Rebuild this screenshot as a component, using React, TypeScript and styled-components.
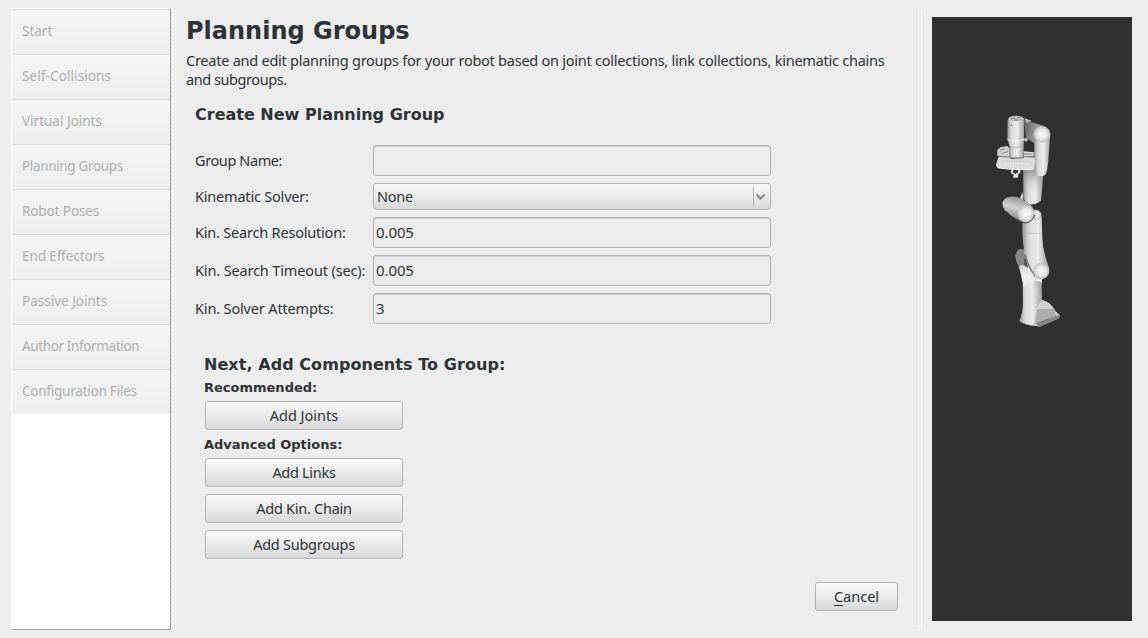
import React from "react";
import styled, { createGlobalStyle } from "styled-components";

const Global = createGlobalStyle`
  * { box-sizing: border-box; }
  html, body { margin: 0; padding: 0; }
  body { background: #ededed; overflow: hidden; }
`;

const Window = styled.div`
  display: flex;
  width: 1148px;
  height: 638px;
  padding: 8px 16px 8px 11px;
  background: #ededed;
  color: #2e3436;
  font: 14.5px/19px "Noto Sans", sans-serif;
`;

const StepList = styled.nav`
  flex: none;
  width: 160px;
  height: 622px;
  background: #fff;
  border: 1px solid #fff;
  border-right-color: #a0a0a0;
  border-bottom-color: #a0a0a0;
`;

const Step = styled.div<{ $ls: number }>`
  height: 45px;
  padding: 12px 0 0 10px;
  border-top: 1px solid #dcdcdc;
  background: linear-gradient(#f5f5f5, #eeeeee);
  color: #aeb0b0;
  font-size: 13.5px;
  line-height: 18px;
  letter-spacing: ${(p) => p.$ls}px;
  white-space: nowrap;
`;

const dots = "linear-gradient(#fff 1px, transparent 1px)";

const Splitter = styled.div<{ $x: number }>`
  flex: none;
  width: 5px;
  height: 621px;
  margin-top: 1px;
  background:
    ${(p) => `${dots} ${p.$x}px 0 / 1px 2px repeat-y,
    ${dots} ${p.$x + 1}px 1px / 1px 4px repeat-y,
    ${dots} ${p.$x + 3}px 1px / 1px 2px repeat-y`};
`;

const Page = styled.main`
  display: flex;
  flex-direction: column;
  width: 742px;
  padding: 0 20px 19px 10px;
`;

const Title = styled.h1`
  margin: 7px 0 0;
  font: bold 24px/32px "DejaVu Sans", sans-serif;
`;

const Intro = styled.p`
  margin: 4px 0 0;
  white-space: nowrap;
`;

const Line = styled.span<{ $ls: number }>`
  display: block;
  letter-spacing: ${(p) => p.$ls}px;
`;

const Heading = styled.h2<{ $ls?: number }>`
  margin: 0;
  font: bold 16px/20px "DejaVu Sans", sans-serif;
  letter-spacing: ${(p) => p.$ls ?? 0}px;
`;

const SubHeading = styled.h3<{ $top: number }>`
  margin: ${(p) => p.$top}px 0 0;
  font: bold 13px/16px "DejaVu Sans", sans-serif;
`;

const Form = styled.section`
  display: flex;
  flex-direction: column;
  margin: 16px 0 0 9px;
`;

const Fields = styled.div`
  display: grid;
  grid-template-columns: 178px 398px;
  row-gap: 7px;
  align-items: center;
  margin-top: 20px;
`;

const Label = styled.label<{ $ls: number }>`
  letter-spacing: ${(p) => p.$ls}px;
  white-space: nowrap;
`;

const Field = styled.div`
  height: 31px;
  padding: 5px 2px;
  border: 1px solid #b4b4b4;
  border-radius: 3px;
  background: #ededed;
  box-shadow: inset 0 1px #cfcfcf, 0 1px #f6f6f6;
  font-size: 15px;
  letter-spacing: -0.1px;
`;

const Combo = styled.div`
  display: flex;
  align-items: center;
  justify-content: space-between;
  height: 27px;
  padding: 0 4px 0 3px;
  border: 1px solid #b4b4b4;
  border-radius: 3px;
  background: linear-gradient(#fbfbfb, #d8d8d8);
  box-shadow: 0 1px #f6f6f6;
  letter-spacing: -0.25px;
`;

const Arrow = styled.span`
  display: flex;
  align-items: center;
  height: 20px;
  padding-left: 1px;
  border-left: 1px solid #b0b0b0;
`;

const Components = styled.section`
  display: flex;
  flex-direction: column;
  margin: 31px 0 0 18px;
`;

const Button = styled.button<{ $w: number; $top: number; $ls?: number }>`
  width: ${(p) => p.$w}px;
  height: 29px;
  margin: ${(p) => p.$top}px 0 0 1px;
  padding: 0;
  border: 1px solid #b4b4b4;
  border-radius: 3px;
  background: linear-gradient(#fafafa, #d9d9d9);
  box-shadow: 0 1px #f6f6f6;
  color: #2e3436;
  font: 14.5px/19px "Noto Sans", sans-serif;
  letter-spacing: ${(p) => p.$ls ?? 0}px;
`;

const Mnemonic = styled.span`
  display: inline-block;
  height: 19px;
  border-bottom: 1px solid #2e3436;
`;

const Footer = styled.footer`
  display: flex;
  justify-content: flex-end;
  margin-top: auto;
`;

const Viewport = styled.aside`
  flex: none;
  width: 200px;
  height: 604px;
  margin: 9px 0 0 9px;
  background: #303030;
`;

const steps: [string, number][] = [
  ["Start", 0],
  ["Self-Collisions", 0.1],
  ["Virtual Joints", 0],
  ["Planning Groups", -0.34],
  ["Robot Poses", -0.1],
  ["End Effectors", -0.1],
  ["Passive Joints", 0],
  ["Author Information", -0.37],
  ["Configuration Files", -0.23],
];

const Robot = () => (
  <svg width="200" height="604" viewBox="-144 -264 600 1812" aria-label="Robot model">
    <defs>
      <linearGradient id="tube">
        <stop offset="0" stopColor="#979797" />
        <stop offset=".25" stopColor="#dadada" />
        <stop offset=".6" stopColor="#ececec" />
        <stop offset="1" stopColor="#9c9c9c" />
      </linearGradient>
      <linearGradient id="neck" x1="0" y1="0" x2="1" y2=".3">
        <stop offset="0" stopColor="#606060" />
        <stop offset="1" stopColor="#b5b5b5" />
      </linearGradient>
      <linearGradient id="capsule" x1=".6" y1="0" x2=".3" y2="1">
        <stop offset="0" stopColor="#8a8a8a" />
        <stop offset=".45" stopColor="#d2d2d2" />
        <stop offset="1" stopColor="#707070" />
      </linearGradient>
      <linearGradient id="fade" x1="0" y1="0" x2="0" y2="1">
        <stop offset="0" stopColor="#777" stopOpacity=".75" />
        <stop offset=".6" stopColor="#bbb" stopOpacity="0" />
      </linearGradient>
      <radialGradient id="ball">
        <stop offset="0" stopColor="#fafafa" />
        <stop offset=".6" stopColor="#e6e6e6" />
        <stop offset="1" stopColor="#bcbcbc" />
      </radialGradient>
    </defs>
    {/* base column and foot */}
    <path d="M128 535 L129 590 Q129 625 118 648 Q138 664 178 662 L186 600 L185 535 Z" fill="url(#tube)" />
    <path d="M166 616 Q178 592 186 585 Q210 590 222 612 L226 618 L239 630 L237 640 L178 665 L160 660 Z" fill="#d2d2d2" />
    <path d="M171 613 L223 611 L228 632 L166 654 Z" fill="#adadad" />
    <path d="M228 632 L239 630 L237 640 L178 665 L166 654 Z" fill="#858585" />
    {/* shoulder */}
    <path d="M107 454 Q106 438 120 433 L142 440 L150 485 L186 512 L186 540 Q170 554 148 550 Q132 546 127 530 Q120 490 109 468 Z" fill="url(#tube)" />
    <path d="M107 456 Q106 433 130 433 L140 440 L143 486 L135 484 Q122 476 118 485 Q108 468 107 456 Z" fill="#858585" />
    <path d="M131 460 Q140 464 145 490 L132 478 Z" fill="#505050" />
    <path d="M120 486 Q140 510 165 520 L186 520 L186 534 Q170 522 150 532 L132 545 Q124 510 120 486 Z" fill="#ededed" />
    {/* lower arm */}
    <path d="M150 317 Q180 308 185 336 L187 400 Q189 442 206 484 L206 500 L168 517 Q148 500 137 460 Q126 420 127 345 Z" fill="url(#tube)" />
    <path d="M136 450 Q146 492 166 512" fill="none" stroke="#777" strokeWidth="4" />
    <path d="M136 385 H180" stroke="#aaa" strokeWidth="2" strokeDasharray="5 3" />
    <circle cx="184" cy="498" r="24" fill="url(#ball)" />
    {/* elbow */}
    <path d="M130 190 H190 Q188 245 183 286 Q172 300 150 298 Q133 294 130 275 Z" fill="url(#tube)" />
    <path d="M130 190 H190 Q188 245 183 286 Q172 300 150 298 Q133 294 130 275 Z" fill="url(#fade)" />
    <path d="M128 260 L120 278 L130 288 Z" fill="#d0d0d0" />
    <circle cx="168" cy="330" r="16" fill="url(#ball)" />
    <path d="M92 275 Q106 272 120 280 L150 298 Q164 310 162 330 Q156 352 134 352 Q104 344 76 318 Q64 302 69 289 Q76 276 92 275 Z" fill="url(#capsule)" />
    <circle cx="138" cy="326" r="26" fill="url(#ball)" />
    <path d="M78 319 Q110 352 136 354 Q158 352 164 330" fill="none" stroke="#444" strokeWidth="3" />
    {/* upper arm */}
    <path d="M163 88 H211 L205 165 Q203 200 195 210 Q180 218 162 208 Z" fill="url(#tube)" />
    <path d="M133 42 L152 50 L192 64 L165 115 L138 100 Z" fill="url(#neck)" />
    <path d="M133 40 L155 47 L140 54 Z" fill="#bdbdbd" />
    <circle cx="186" cy="88" r="25" fill="url(#ball)" />
    <path d="M133 98 L144 102 L140 110 L133 108 Z" fill="#c8c8c8" />
    {/* gripper */}
    <path d="M52 135 L62 126 L83 123 L90 135 L88 156 L52 153 Z" fill="#cecece" />
    <path d="M60 135 L74 131 M66 145 L84 140" stroke="#8a8a8a" strokeWidth="3" />
    <path d="M131 139 L162 142 L161 154 H131 Z" fill="#e5e5e5" />
    <path d="M132 147 H158" stroke="#6b6b6b" strokeWidth="3" />
    <path d="M95 191 L92 203 L101 209 L99 218 H114 L115 208 L122 202 L119 191 Z" fill="#dedede" />
    <path d="M100 193 L99 202 L106 207 L114 202 L113 193 Z" fill="#343434" />
    {/* wrist */}
    <path d="M88 100 H131 V158 H88 Z" fill="url(#tube)" />
    <path d="M83 45 Q90 32 110 32 Q130 33 133 45 L132 106 Q130 122 128 124 L90 122 Q82 112 82 102 Z" fill="url(#tube)" />
    <ellipse cx="108" cy="41" rx="23" ry="8" fill="#bcbcbc" />
    <path d="M94 40 H107 M112 37 H122 M103 45 H116" stroke="#777" strokeWidth="2.5" />
    <path d="M83 103 Q105 113 132 103" fill="none" stroke="#f0f0f0" strokeWidth="3" />
    <path d="M89 124 Q108 130 130 124" fill="none" stroke="#a8a8a8" strokeWidth="2" />
    <path d="M57 153 L88 156 L92 161 L130 160 L134 154 L160 155 L166 166 L162 193 Q100 198 54 189 Q47 184 48 178 Z" fill="#dcdcdc" />
    <path d="M57 154 L88 157 M134 155 L160 156" fill="none" stroke="#555" strokeWidth="2" />
    <path d="M66 168 L150 169" stroke="#a0a0a0" strokeWidth="2" strokeDasharray="3 4" />
    <path d="M52 188 Q100 196 162 193" fill="none" stroke="#f2f2f2" strokeWidth="3" />
    <rect x="93" y="60" width="3" height="3" fill="#333" />
  </svg>
);

export default function App() {
  return (
    <>
      <Global />
      <Window>
        <StepList>
          {steps.map(([name, ls]) => (
            <Step key={name} $ls={ls}>{name}</Step>
          ))}
        </StepList>
        <Splitter $x={1} />
        <Page>
          <Title>Planning Groups</Title>
          <Intro>
            <Line $ls={-0.245}>Create and edit planning groups for your robot based on joint collections, link collections, kinematic chains</Line>
            <Line $ls={-0.43}>and subgroups.</Line>
          </Intro>
          <Form>
            <Heading>Create New Planning Group</Heading>
            <Fields>
              <Label $ls={-0.4}>Group Name:</Label>
              <Field />
              <Label $ls={-0.2}>Kinematic Solver:</Label>
              <Combo>
                None
                <Arrow>
                  <svg width="11" height="8" viewBox="0 0 11 8">
                    <path d="M1.5 1.5 L5.5 5.5 L9.5 1.5" fill="none" stroke="#888a85" strokeWidth="2" />
                  </svg>
                </Arrow>
              </Combo>
              <Label $ls={-0.2}>Kin. Search Resolution:</Label>
              <Field>0.005</Field>
              <Label $ls={-0.14}>Kin. Search Timeout (sec):</Label>
              <Field>0.005</Field>
              <Label $ls={-0.15}>Kin. Solver Attempts:</Label>
              <Field>3</Field>
            </Fields>
          </Form>
          <Components>
            <Heading $ls={0.06}>Next, Add Components To Group:</Heading>
            <SubHeading $top={5}>Recommended:</SubHeading>
            <Button $w={198} $top={5}>Add Joints</Button>
            <SubHeading $top={7}>Advanced Options:</SubHeading>
            <Button $w={198} $top={5} $ls={-0.3}>Add Links</Button>
            <Button $w={198} $top={7} $ls={-0.27}>Add Kin. Chain</Button>
            <Button $w={198} $top={7} $ls={-0.25}>Add Subgroups</Button>
          </Components>
          <Footer>
            <Button $w={83} $top={0}><Mnemonic>C</Mnemonic>ancel</Button>
          </Footer>
        </Page>
        <Splitter $x={0} />
        <Viewport><Robot /></Viewport>
      </Window>
    </>
  );
}
